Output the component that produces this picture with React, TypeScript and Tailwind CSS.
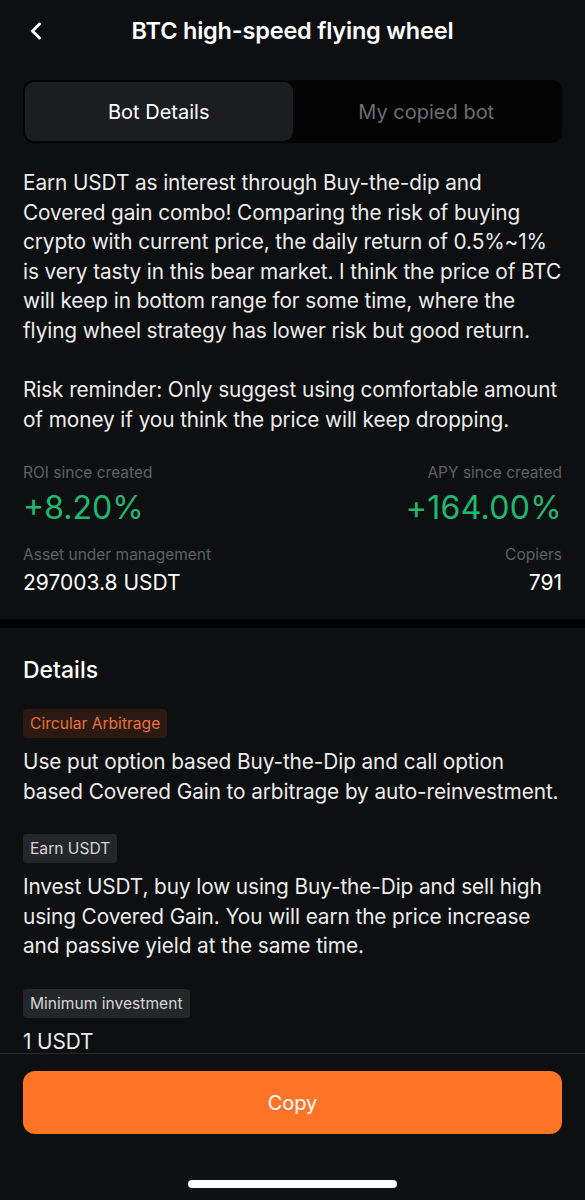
import { ChevronLeft } from 'lucide-react'

type DetailItem = {
  tag: string
  tone: 'orange' | 'gray'
  text: string
}

const details: DetailItem[] = [
  {
    tag: 'Circular Arbitrage',
    tone: 'orange',
    text: 'Use put option based Buy-the-Dip and call option based Covered Gain to arbitrage by auto-reinvestment.',
  },
  {
    tag: 'Earn USDT',
    tone: 'gray',
    text: 'Invest USDT, buy low using Buy-the-Dip and sell high using Covered Gain. You will earn the price increase and passive yield at the same time.',
  },
  {
    tag: 'Minimum investment',
    tone: 'gray',
    text: '1 USDT',
  },
]

export default function App() {
  return (
    <div
      className="flex flex-col h-[1200px] w-full overflow-hidden bg-[#0e0f11] text-white"
      style={{ fontFamily: 'Inter, "Noto Sans", sans-serif' }}
    >
      {/* Header */}
      <div className="relative flex items-center justify-center h-[62px] shrink-0">
        <button className="absolute left-[22px] top-[17px] text-white">
          <ChevronLeft className="w-7 h-7" strokeWidth={2.5} />
        </button>
        <h1 className="text-[23.5px] font-semibold tracking-[-0.2px]">BTC high-speed flying wheel</h1>
      </div>

      <div className="flex-1 overflow-hidden">
        {/* Tabs */}
        <div className="px-[23px] pt-[18px]">
          <div className="flex h-[63px] rounded-[10px] bg-[#040404] p-[2px]">
            <div className="flex-1 flex items-center justify-center rounded-[9px] bg-[#1c1d21] text-[20px] text-white">
              Bot Details
            </div>
            <div className="flex-1 flex items-center justify-center text-[20px] text-[#6b6d72]">
              My copied bot
            </div>
          </div>
        </div>

        {/* Description */}
        <div className="px-[23px] pt-[25px] text-[20.8px] leading-[29.6px] text-[#ececec] tracking-[-0.1px]">
          <p>
            Earn USDT as interest through Buy-the-dip and Covered gain combo! Comparing the risk of buying crypto
            with current price, the daily return of 0.5%~1% is very tasty in this bear market. I think the price of
            BTC will keep in bottom range for some time, where the flying wheel strategy has lower risk but good
            return.
          </p>
          <p className="mt-[29.6px]">
            Risk reminder: Only suggest using comfortable amount of money if you think the price will keep dropping.
          </p>
        </div>

        {/* Stats */}
        <div className="px-[23px] pt-[29px] pb-[22px]">
          <div className="flex justify-between">
            <div>
              <div className="text-[15.5px] leading-[20px] text-[#5f6166]">ROI since created</div>
              <div className="mt-[6px] text-[32px] leading-[38px] text-[#20b871]">+8.20%</div>
            </div>
            <div className="text-right">
              <div className="text-[15.5px] leading-[20px] text-[#5f6166]">APY since created</div>
              <div className="mt-[6px] text-[32px] leading-[38px] text-[#20b871] tracking-[0.3px]">+164.00%</div>
            </div>
          </div>
          <div className="flex justify-between mt-[18px]">
            <div>
              <div className="text-[15.5px] leading-[20px] text-[#5f6166]">Asset under management</div>
              <div className="mt-[4px] text-[21px] leading-[28px] text-white">297003.8 USDT</div>
            </div>
            <div className="text-right">
              <div className="text-[15.5px] leading-[20px] text-[#5f6166]">Copiers</div>
              <div className="mt-[4px] text-[21px] leading-[28px] text-white">791</div>
            </div>
          </div>
        </div>

        <div className="h-[9px] bg-[#030303]" />

        {/* Details */}
        <div className="px-[23px] pt-[27px]">
          <h2 className="text-[23px] leading-[30px] font-medium text-white">Details</h2>
          <div className="flex flex-col gap-[28px] mt-[24px]">
            {details.map((item) => (
              <div key={item.tag}>
                <span
                  className={
                    item.tone === 'orange'
                      ? 'inline-flex items-center h-[29px] px-[7px] rounded-[4px] bg-[#2b1912] text-[15.6px] text-[#e8713d]'
                      : 'inline-flex items-center h-[29px] px-[7px] rounded-[4px] bg-[#25262a] text-[15.6px] text-[#d6d6d8]'
                  }
                >
                  {item.tag}
                </span>
                <p className="mt-[9px] text-[20.8px] leading-[29.5px] text-[#ececec] tracking-[-0.1px]">{item.text}</p>
              </div>
            ))}
          </div>
        </div>
      </div>

      {/* Footer */}
      <div className="shrink-0 h-[147px] border-t border-[#26272a] bg-[#0e0f11] flex flex-col items-center">
        <div className="w-full px-[23px] pt-[17px]">
          <button className="w-full h-[63px] rounded-[12px] bg-[#fe7427] text-[20px] text-white">Copy</button>
        </div>
        <div className="mt-[46px] w-[209px] h-[8px] rounded-full bg-white" />
      </div>
    </div>
  )
}
